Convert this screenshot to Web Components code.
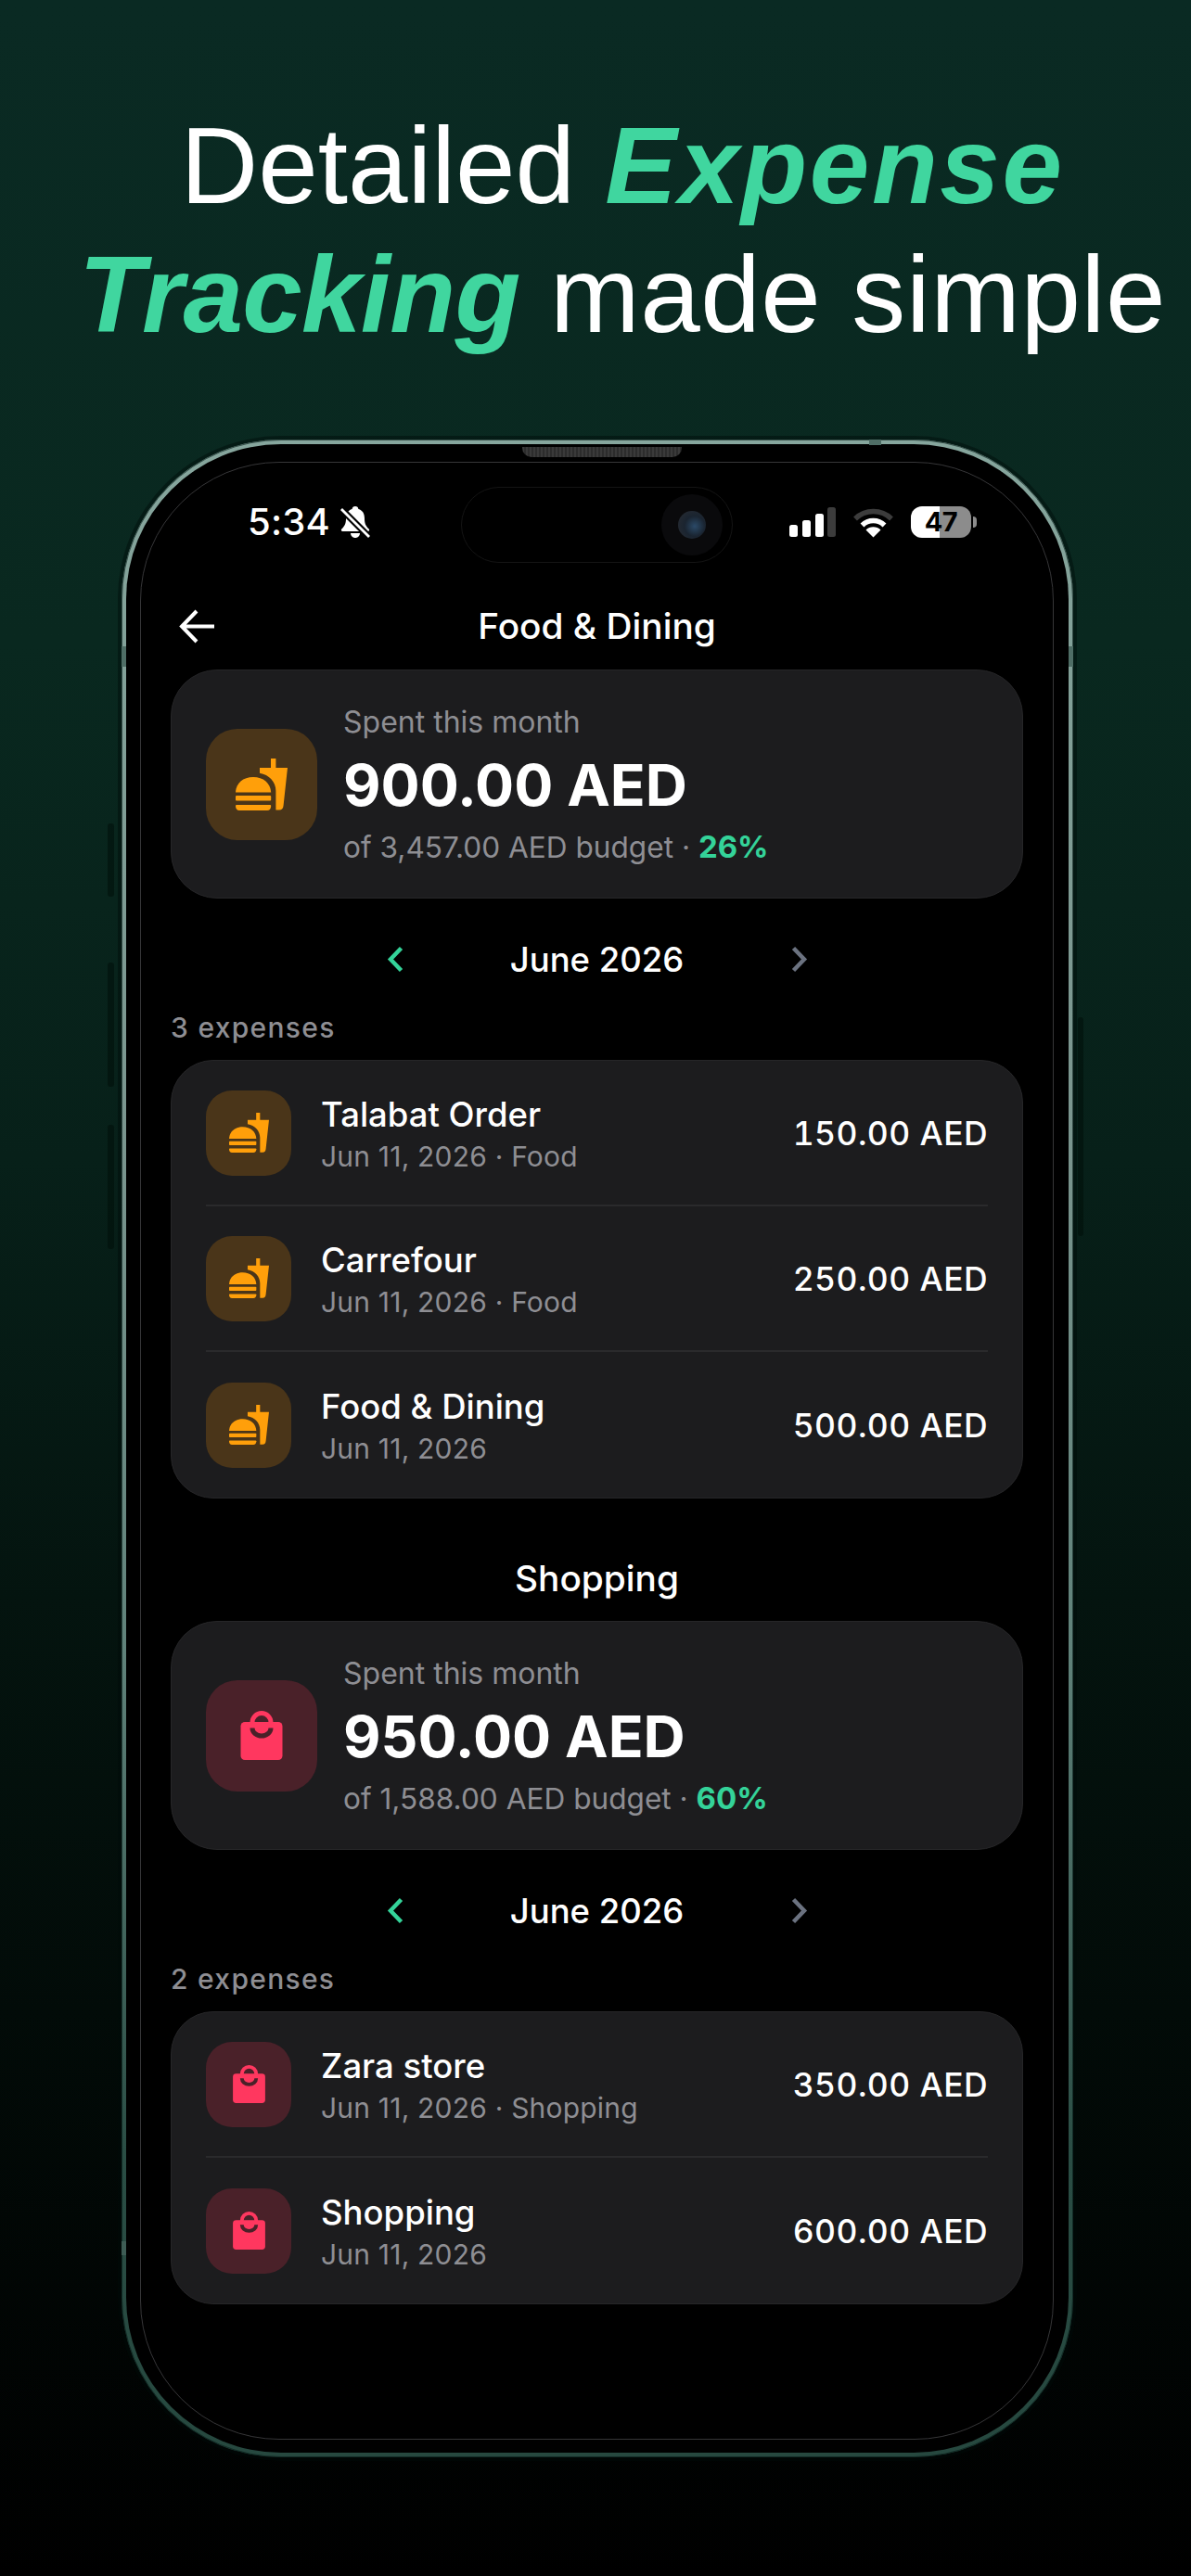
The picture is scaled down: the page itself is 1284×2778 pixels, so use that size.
<!DOCTYPE html>
<html lang="en">
<head>
<meta charset="utf-8">
<title>Detailed Expense Tracking</title>
<style>
html,body{margin:0;padding:0;background:#000}
body{width:1284px;height:2778px;overflow:hidden;font-family:Inter,"Liberation Sans",sans-serif;color:#fff}
</style>
</head>
<body>
<promo-page>
  <promo-headline>
    <span slot="one">Detailed <accent-text style="letter-spacing:2.6px">Expense</accent-text></span>
    <span slot="two"><accent-text style="letter-spacing:-.7px">Tracking</accent-text> <span style="letter-spacing:.6px">made simple</span></span>
  </promo-headline>
  <phone-frame>
    <status-bar></status-bar>
    <screen-title>Food &amp; Dining</screen-title>
    <spend-card kind="food" amount="900.00 AED" budget="of 3,457.00 AED budget" pct="26%"></spend-card>
    <month-nav>June 2026</month-nav>
    <count-label>3 expenses</count-label>
    <expense-list>
      <expense-row kind="food" name="Talabat Order" meta="Jun 11, 2026 · Food" amount="150.00 AED"></expense-row>
      <expense-row kind="food" name="Carrefour" meta="Jun 11, 2026 · Food" amount="250.00 AED"></expense-row>
      <expense-row kind="food" name="Food &amp; Dining" meta="Jun 11, 2026" amount="500.00 AED"></expense-row>
    </expense-list>
    <section-title>Shopping</section-title>
    <spend-card kind="shop" amount="950.00 AED" budget="of 1,588.00 AED budget" pct="60%"></spend-card>
    <month-nav>June 2026</month-nav>
    <count-label>2 expenses</count-label>
    <expense-list>
      <expense-row kind="shop" name="Zara store" meta="Jun 11, 2026 · Shopping" amount="350.00 AED"></expense-row>
      <expense-row kind="shop" name="Shopping" meta="Jun 11, 2026" amount="600.00 AED"></expense-row>
    </expense-list>
  </phone-frame>
</promo-page>
<script>
const def = (name, css, html) => {
  customElements.define(name, class extends HTMLElement {
    constructor(){
      super();
      const root = this.attachShadow({mode:'open'});
      root.innerHTML = '<style>' + css + '</style>' + (typeof html === 'function' ? '' : html);
      this._html = html;
    }
    connectedCallback(){
      if (typeof this._html === 'function' && !this._done) {
        this._done = true;
        const t = document.createElement('template');
        t.innerHTML = this._html(k => this.getAttribute(k) || '');
        this.shadowRoot.appendChild(t.content);
      }
    }
  });
};

const FOOD = `<svg viewBox="0 0 56 56" width="100%" height="100%" fill="#ff9f0a" aria-hidden="true">
<rect x="38" y="0" width="5.4" height="11"/>
<path d="M26 10H56L51.6 50.5C51.3 53.8 50 55.6 47 55.6H43.4V35C43.4 25 36 17.5 26 15.8Z"/>
<path d="M0 36.5C0.4 26.5 8 20 19 20C30 20 37.6 26.5 38.2 36.5Z"/>
<path d="M1 40H37.2A1 1 0 0 1 38.2 41V44.6A1 1 0 0 1 37.2 45.6H1A1 1 0 0 1 0 44.6V41A1 1 0 0 1 1 40Z"/>
<path d="M1 50H37.2A1 1 0 0 1 38.2 51C38.2 54 36.6 56 34 56H4C1.6 56 0 54 0 51A1 1 0 0 1 1 50Z"/>
</svg>`;
const SHOP = `<svg viewBox="0 0 45 53" width="100%" height="100%" aria-hidden="true">
<rect x="0" y="12" width="45" height="41" rx="4.5" fill="#ff375f"/>
<path d="M12.5 14V12.5A10 10 0 0 1 32.5 12.5V14" fill="none" stroke="#ff375f" stroke-width="5"/>
<path d="M12.5 18.5A10 8.5 0 0 0 32.5 18.5" fill="none" stroke="var(--hole,#4a2129)" stroke-width="5"/>
</svg>`;

def('promo-page', `:host{display:block;width:1284px;height:2778px;background:linear-gradient(180deg,#0a2a23 0,#09281f 25%,#072019 45%,#04140f 62%,#020b08 78%,#000 100%);overflow:hidden}`, `<slot></slot>`);

def('accent-text', `:host{display:inline;font-style:italic;font-weight:700;color:#40d69f}`, `<slot></slot>`);

def('promo-headline', `:host{display:block;box-sizing:border-box;height:474px;padding:110px 0 0 58px;text-align:center;font:400 116px/139px "Liberation Sans",Arial,sans-serif;color:#fff}
div{white-space:nowrap}
::slotted(span){display:block}`,
`<div><slot name="one"></slot></div><div><slot name="two"></slot></div>`);

def('phone-frame', `:host{display:block;position:relative;width:1026px;height:2176px;margin:0 0 0 131px;box-sizing:border-box;border:5px solid transparent;border-radius:172px;
background:linear-gradient(#000,#000) padding-box,linear-gradient(180deg,#86a69d 0,#7a958e 35%,#60827a 60%,#2a4d44 85%,#26483f 100%) border-box;
box-shadow:0 0 0 4px rgba(0,10,8,.45)}
.rim{position:absolute;inset:-5px;border:1.500px solid rgba(3,24,20,.6);border-radius:172px;pointer-events:none}
.screen{position:absolute;inset:19px 16px 14px 15px;box-sizing:border-box;border:1px solid #363638;border-radius:150px;padding:0 32px;overflow:hidden}
.btn{position:absolute;background:rgba(0,14,10,.55);border-radius:3px}
.l{left:-20px;width:7px}
.r{right:-16px;width:6px}
.band{position:absolute;background:#4f6e66}
.speaker{position:absolute;left:427px;top:3px;width:172px;height:11px;border-radius:0 0 10px 10px;background:repeating-linear-gradient(90deg,#3a3a3a 0 2px,#2c2c2c 2px 4px)}
.island{position:absolute;left:361px;top:46px;width:293px;height:82px;box-sizing:border-box;border:1px solid #141414;border-radius:41px;background:transparent}
.lens{position:absolute;right:10px;top:7px;width:66px;height:66px;border-radius:50%;background:#0a0a0c}
.lens i{position:absolute;left:18px;top:18px;width:30px;height:30px;border-radius:50%;background:radial-gradient(circle at 60% 55%,#2b4a68 0,#1a2430 45%,#2a2d33 100%)}`,
`<span class="rim"></span>
<span class="btn l" style="top:409px;height:79px"></span>
<span class="btn l" style="top:559px;height:134px"></span>
<span class="btn l" style="top:734px;height:134px"></span>
<span class="btn r" style="top:618px;height:236px"></span>
<span class="band" style="left:801px;top:-5px;width:13px;height:6px"></span>
<span class="band" style="left:-5px;top:218px;width:5px;height:22px"></span>
<span class="band" style="right:-5px;top:218px;width:5px;height:22px"></span>
<span class="band" style="left:-5px;top:1938px;width:5px;height:15px;background:#3d5c54"></span>
<span class="speaker"></span>
<div class="screen"><slot></slot></div>
<div class="island" role="presentation"><div class="lens"><i></i></div></div>`);

def('status-bar', `:host{display:flex;align-items:center;height:128px;box-sizing:border-box;margin:0 -32px;padding:0 82px 0 115px;font:500 40px/42px Inter,sans-serif;color:#fff}
.time{letter-spacing:.2px;margin-right:11px}
.gap{flex:1}
.right{display:flex;align-items:center}
.bat{position:relative;width:65px;height:34px;border-radius:12px;overflow:hidden;background:linear-gradient(90deg,#fff 0 31px,#8c8c8c 31px);color:#000;font:700 29px/34px Inter,sans-serif;text-align:center;letter-spacing:-.5px}
.cap{width:4px;height:12px;margin-left:2px;background:#8c8c8c;border-radius:0 4px 4px 0}
svg{display:block}`,
`<span class="time">5:34</span>
<svg width="32" height="34" viewBox="0 0 32 34" aria-hidden="true"><path fill="#fff" d="M16 0c-2 0-3.200 1.300-3.400 3C8 4.300 6 8 6 13c0 4.500-.8 8-4.700 11.500C.3 25.400 1 27 2.300 27h27.400c1.300 0 2-1.600 1-2.500C26.800 21 26 17.500 26 13c0-5-2-8.700-6.600-10C19.200 1.300 18 0 16 0z"/><path fill="#fff" d="M11 29h10c0 2.800-2.200 5-5 5s-5-2.200-5-5z"/><path d="M1 3L31 33" stroke="#000" stroke-width="7"/><path d="M1 3L31 33" stroke="#fff" stroke-width="2.800"/></svg>
<span class="gap"></span>
<div class="right">
<svg width="51" height="33" viewBox="0 0 51 33" aria-hidden="true"><rect x="1" y="19" width="9" height="13" rx="2.500" fill="#fff"/><rect x="15" y="14" width="9" height="18" rx="2.500" fill="#fff"/><rect x="29" y="7" width="9" height="25" rx="2.500" fill="#fff"/><rect x="42" y="0" width="9" height="32" rx="2.500" fill="#3c3c3c"/></svg>
<svg style="margin:0 18px" width="45" height="33" viewBox="0 0 45 33" aria-hidden="true"><path d="M3 12.500A28 28 0 0 1 42 12.500" fill="none" stroke="#3c3c3c" stroke-width="5.500"/><path d="M10.500 19.500A17 17 0 0 1 34.500 19.500" fill="none" stroke="#fff" stroke-width="5.500"/><path d="M22.500 32.500L14.500 24.500A11.500 11.500 0 0 1 30.500 24.500Z" fill="#fff"/></svg>
<div class="bat">47</div><div class="cap"></div>
</div>`);

def('screen-title', `:host{display:flex;position:relative;align-items:center;justify-content:center;height:95px;font:550 38.800px/48px Inter,sans-serif;color:#fff}
svg{position:absolute;left:9px;top:30px}`,
`<svg width="39" height="37" viewBox="0 0 39 37" aria-hidden="true"><path d="M38 18.500H4M19 2L3 18.500L19 35" fill="none" stroke="#fff" stroke-width="4"/></svg><slot></slot>`);

const iconFor = k => k === 'food' ? FOOD : SHOP;
const tint = k => k === 'food' ? '#4a3519' : '#4a2129';

def('spend-card', `:host{display:flex;align-items:center;height:247px;box-sizing:border-box;border:1px solid #262628;border-radius:50px;background:#1c1c1e;padding:0 37px;gap:28px}
.ic{flex:none;width:120px;height:120px;border-radius:34px;display:flex;align-items:center;justify-content:center}
.g{width:56px;height:56px}
.g.shop{width:46px;height:53px}
.t{display:flex;flex-direction:column;gap:11px;padding-top:1px}
.a{font:400 32px/40px Inter,sans-serif;color:#8e8e93}
.b{font:700 62.500px/72px Inter,sans-serif;color:#fff}
.c{font:400 31.600px/40px Inter,sans-serif;color:#8e8e93;white-space:nowrap}
.c b{font-weight:700;font-size:33px;color:#34d399}`,
a => `<div class="ic" style="background:${tint(a('kind'))}"><div class="g ${a('kind')}" style="--hole:${tint(a('kind'))}">${iconFor(a('kind'))}</div></div>
<div class="t"><div class="a">Spent this month</div><div class="b">${a('amount')}</div><div class="c">${a('budget')} · <b>${a('pct')}</b></div></div>`);

def('month-nav', `:host{display:flex;align-items:center;justify-content:center;height:60px;margin-top:35px;font:550 36.500px/48px Inter,sans-serif;color:#fff;gap:0}
.m{width:416px;text-align:center;padding-top:1px}
.s{width:19px;display:flex}
svg{display:block}`,
`<div class="s"><svg width="19" height="29" viewBox="0 0 19 29" aria-hidden="true"><path d="M15.500 2.500L4 14.500L15.500 26.500" fill="none" stroke="#34d399" stroke-width="4.500"/></svg></div>
<div class="m"><slot></slot></div>
<div class="s"><svg width="19" height="29" viewBox="0 0 19 29" aria-hidden="true"><path d="M3.500 2.500L15 14.500L3.500 26.500" fill="none" stroke="#6b7280" stroke-width="4.500"/></svg></div>`);

def('count-label', `:host{display:block;margin:26px 0 17px 0;font:500 30px/36px Inter,sans-serif;letter-spacing:1.300px;color:#8e8e93}`, `<slot></slot>`);

def('expense-list', `:host{display:block;box-sizing:border-box;border:1px solid #262628;border-radius:46px;background:#1c1c1e;overflow:hidden}`, `<slot></slot>`);

def('expense-row', `:host{display:block;padding:0 37px}
.r{display:flex;align-items:center;height:157px;box-sizing:border-box;position:relative;gap:32px}
:host(:not(:last-child)) .r{border-bottom:2px solid #2a2a2c}
.ic{flex:none;width:92px;height:92px;border-radius:28px;display:flex;align-items:center;justify-content:center}
.g{width:43px;height:43px}
.g.shop{width:35px;height:41px}
.t{flex:1;display:flex;flex-direction:column;gap:4px;padding-top:3px}
.n{font:550 36.500px/44px Inter,sans-serif;color:#fff}
.m{font:400 30px/38px Inter,sans-serif;color:#8e8e93;letter-spacing:.2px}
.v{font:550 35.500px/44px Inter,sans-serif;font-variant-numeric:tabular-nums;letter-spacing:.4px;color:#fff;white-space:nowrap;padding-top:2px}`,
a => `<div class="r" style="--hole:${tint(a('kind'))}"><div class="ic" style="background:${tint(a('kind'))}"><div class="g ${a('kind')}">${iconFor(a('kind'))}</div></div>
<div class="t"><div class="n">${a('name')}</div><div class="m">${a('meta')}</div></div><div class="v">${a('amount')}</div></div>`);

def('section-title', `:host{display:block;margin:61px 0 21px;height:50px;text-align:center;font:550 38.800px/50px Inter,sans-serif;color:#fff}`, `<slot></slot>`);
</script>
</body>
</html>
